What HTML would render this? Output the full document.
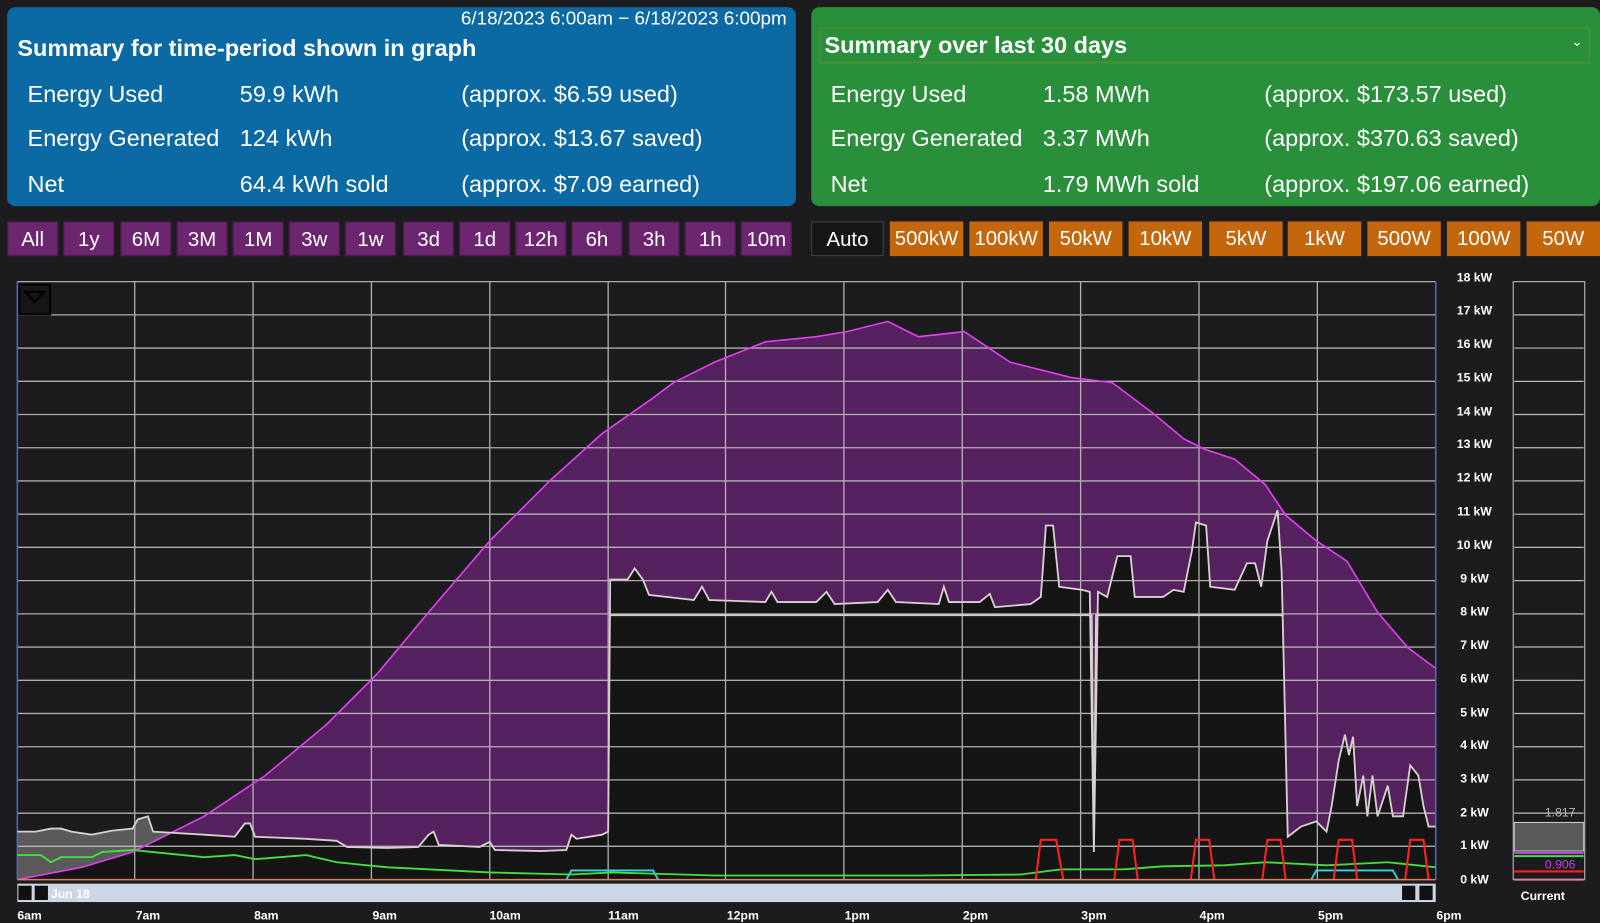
<!DOCTYPE html>
<html><head><meta charset="utf-8"><style>
body{margin:0;width:1600px;height:923px;background:#1c1c1e;font-family:"Liberation Sans",sans-serif;color:#fff;position:relative;overflow:hidden}
#w{position:absolute;left:0;top:0;width:1568px;height:905px;transform:scale(1.020408);transform-origin:0 0}
.panel{position:absolute;top:7px;height:195px;border-radius:8px}
.blue{left:7px;width:773px;background:#0b69a3}
.green{left:795px;width:773px;background:#2a8f3a}
.t{position:absolute;font-size:23px;white-space:nowrap}
.b{font-weight:bold;font-size:23px}
.btn{position:absolute;top:217px;height:34px;line-height:34px;text-align:center;font-size:20px;box-sizing:border-box}
.p{background:#6c256f;border:1px solid #4a1a4c;width:50px}
.o{background:#c4660c;width:72px}
.ax{font-weight:bold;font-size:12px;fill:#fff;font-family:"Liberation Sans",sans-serif}
</style></head><body><div id="w">
<div class="panel blue"></div>
<div class="panel green"></div>
<div style="position:absolute;left:803px;top:27px;width:755px;height:35px;border:1px solid #6a8a2a;box-sizing:border-box"></div>
<div class="t" style="right:797px;top:7px;font-size:18.5px">6/18/2023 6:00am − 6/18/2023 6:00pm</div>
<div class="t b" style="left:17px;top:34px">Summary for time-period shown in graph</div>
<div class="t b" style="left:808px;top:31px">Summary over last 30 days</div>
<div class="t" style="left:1540px;top:33px;font-size:13px">⌄</div>
<div class="t" style="left:27px;top:79px">Energy Used</div><div class="t" style="left:235px;top:79px">59.9 kWh</div><div class="t" style="left:452px;top:79px">(approx. $6.59 used)</div>
<div class="t" style="left:27px;top:122px">Energy Generated</div><div class="t" style="left:235px;top:122px">124 kWh</div><div class="t" style="left:452px;top:122px">(approx. $13.67 saved)</div>
<div class="t" style="left:27px;top:167px">Net</div><div class="t" style="left:235px;top:167px">64.4 kWh sold</div><div class="t" style="left:452px;top:167px">(approx. $7.09 earned)</div>
<div class="t" style="left:814px;top:79px">Energy Used</div><div class="t" style="left:1022px;top:79px">1.58 MWh</div><div class="t" style="left:1239px;top:79px">(approx. $173.57 used)</div>
<div class="t" style="left:814px;top:122px">Energy Generated</div><div class="t" style="left:1022px;top:122px">3.37 MWh</div><div class="t" style="left:1239px;top:122px">(approx. $370.63 saved)</div>
<div class="t" style="left:814px;top:167px">Net</div><div class="t" style="left:1022px;top:167px">1.79 MWh sold</div><div class="t" style="left:1239px;top:167px">(approx. $197.06 earned)</div>

<div class="btn p" style="left:7px">All</div><div class="btn p" style="left:62px">1y</div><div class="btn p" style="left:118px">6M</div><div class="btn p" style="left:173px">3M</div><div class="btn p" style="left:228px">1M</div><div class="btn p" style="left:283px">3w</div><div class="btn p" style="left:338px">1w</div><div class="btn p" style="left:395px">3d</div><div class="btn p" style="left:450px">1d</div><div class="btn p" style="left:505px">12h</div><div class="btn p" style="left:560px">6h</div><div class="btn p" style="left:616px">3h</div><div class="btn p" style="left:671px">1h</div><div class="btn p" style="left:726px">10m</div>
<div class="btn" style="left:795px;width:71px;background:#161616;border:1px solid #444">Auto</div>
<div class="btn o" style="left:872px">500kW</div><div class="btn o" style="left:950px">100kW</div><div class="btn o" style="left:1028px">50kW</div><div class="btn o" style="left:1106px">10kW</div><div class="btn o" style="left:1185px">5kW</div><div class="btn o" style="left:1262px">1kW</div><div class="btn o" style="left:1340px">500W</div><div class="btn o" style="left:1418px">100W</div><div class="btn o" style="left:1496px">50W</div>

<svg width="1568" height="905" style="position:absolute;left:0;top:0">
<defs><clipPath id="gc"><polygon points="17,862 80,850 130,835 200,800 260,760 320,710 370,660 420,600 480,530 540,470 590,425 640,390 660,375 700,355 750,335 800,330 830,325 870,315 900,330 945,325 990,355 1050,370 1090,375 1130,405 1160,430 1180,440 1210,450 1240,475 1260,505 1290,530 1320,550 1350,600 1380,635 1407,655 1407,862"/></clipPath></defs>
<polygon fill="#5a5a5a" points="17,862 17,815 35,815 50,812 60,812 70,815 90,818 110,814 130,812 135,803 145,800 150,815 200,818 230,820 240,807 245,807 250,820 300,822 300,862"/>
<polygon fill="#55215f" points="17,862 80,850 130,835 200,800 260,760 320,710 370,660 420,600 480,530 540,470 590,425 640,390 660,375 700,355 750,335 800,330 830,325 870,315 900,330 945,325 990,355 1050,370 1090,375 1130,405 1160,430 1180,440 1210,450 1240,475 1260,505 1290,530 1320,550 1350,600 1380,635 1407,655 1407,862"/>
<g clip-path="url(#gc)"><polygon fill="#151515" points="17,862 17,815 35,815 50,812 60,812 70,815 90,818 110,814 130,812 135,803 145,800 150,815 200,818 230,820 240,807 245,807 250,820 300,822 330,824 340,830 380,831 410,830 420,818 425,815 430,828 470,830 480,825 485,833 530,834 555,833 560,818 565,822 590,818 596,815 598,568 615,568 622,557 630,568 636,583 680,588 688,575 695,588 750,590 756,580 762,590 800,590 810,580 818,592 860,590 870,578 878,590 920,592 925,575 930,590 960,590 970,582 975,595 1010,592 1020,585 1025,515 1032,515 1038,575 1060,578 1068,580 1072,835 1076,580 1085,585 1095,545 1108,545 1112,585 1140,585 1150,578 1160,580 1168,540 1172,512 1182,515 1186,575 1210,578 1222,552 1230,552 1236,575 1242,530 1252,500 1256,560 1262,820 1275,810 1290,805 1300,815 1305,790 1312,745 1318,720 1322,740 1326,722 1330,790 1336,760 1340,800 1345,760 1350,800 1360,770 1365,800 1375,800 1382,750 1390,760 1395,790 1400,810 1407,810 1407,862"/></g>
<g stroke="#c8c8c8" stroke-width="1.3" opacity="0.85">
<line x1="17" y1="276" x2="1407" y2="276"/><line x1="17" y1="308.6" x2="1407" y2="308.6"/><line x1="17" y1="341.1" x2="1407" y2="341.1"/><line x1="17" y1="373.7" x2="1407" y2="373.7"/><line x1="17" y1="406.2" x2="1407" y2="406.2"/><line x1="17" y1="438.8" x2="1407" y2="438.8"/><line x1="17" y1="471.3" x2="1407" y2="471.3"/><line x1="17" y1="503.9" x2="1407" y2="503.9"/><line x1="17" y1="536.4" x2="1407" y2="536.4"/><line x1="17" y1="569" x2="1407" y2="569"/><line x1="17" y1="601.6" x2="1407" y2="601.6"/><line x1="17" y1="634.1" x2="1407" y2="634.1"/><line x1="17" y1="666.7" x2="1407" y2="666.7"/><line x1="17" y1="699.2" x2="1407" y2="699.2"/><line x1="17" y1="731.8" x2="1407" y2="731.8"/><line x1="17" y1="764.3" x2="1407" y2="764.3"/><line x1="17" y1="796.9" x2="1407" y2="796.9"/><line x1="17" y1="829.4" x2="1407" y2="829.4"/>
<line x1="132" y1="276" x2="132" y2="862"/><line x1="248" y1="276" x2="248" y2="862"/><line x1="364" y1="276" x2="364" y2="862"/><line x1="480" y1="276" x2="480" y2="862"/><line x1="596" y1="276" x2="596" y2="862"/><line x1="711" y1="276" x2="711" y2="862"/><line x1="827" y1="276" x2="827" y2="862"/><line x1="943" y1="276" x2="943" y2="862"/><line x1="1059" y1="276" x2="1059" y2="862"/><line x1="1175" y1="276" x2="1175" y2="862"/><line x1="1291" y1="276" x2="1291" y2="862"/>
</g>
<line x1="17" y1="276" x2="17" y2="862" stroke="#4a6ad0" stroke-width="1.5"/><line x1="1407" y1="276" x2="1407" y2="862" stroke="#4a6ad0" stroke-width="1.5"/>
<polyline fill="none" stroke="#e040f0" stroke-width="1.6" points="17,862 80,850 130,835 200,800 260,760 320,710 370,660 420,600 480,530 540,470 590,425 640,390 660,375 700,355 750,335 800,330 830,325 870,315 900,330 945,325 990,355 1050,370 1090,375 1130,405 1160,430 1180,440 1210,450 1240,475 1260,505 1290,530 1320,550 1350,600 1380,635 1407,655"/>
<polyline fill="none" stroke="#d8d0d0" stroke-width="1.6" points="598,603 1070,603 1072,830 1074,603 1258,603"/>
<polyline fill="none" stroke="#d8d0d0" stroke-width="1.8" points="17,815 35,815 50,812 60,812 70,815 90,818 110,814 130,812 135,803 145,800 150,815 200,818 230,820 240,807 245,807 250,820 300,822 330,824 340,830 380,831 410,830 420,818 425,815 430,828 470,830 480,825 485,833 530,834 555,833 560,818 565,822 590,818 596,815 598,568 615,568 622,557 630,568 636,583 680,588 688,575 695,588 750,590 756,580 762,590 800,590 810,580 818,592 860,590 870,578 878,590 920,592 925,575 930,590 960,590 970,582 975,595 1010,592 1020,585 1025,515 1032,515 1038,575 1060,578 1068,580 1072,835 1076,580 1085,585 1095,545 1108,545 1112,585 1140,585 1150,578 1160,580 1168,540 1172,512 1182,515 1186,575 1210,578 1222,552 1230,552 1236,575 1242,530 1252,500 1256,560 1262,820 1275,810 1290,805 1300,815 1305,790 1312,745 1318,720 1322,740 1326,722 1330,790 1336,760 1340,800 1345,760 1350,800 1360,770 1365,800 1375,800 1382,750 1390,760 1395,790 1400,810 1407,810"/>
<polyline fill="none" stroke="#44e040" stroke-width="1.8" points="17,838 40,838 50,845 60,840 90,840 100,835 130,833 150,835 200,840 230,838 250,842 300,838 330,845 380,850 480,855 560,857 600,855 700,858 900,858 1000,857 1040,852 1100,852 1140,849 1200,848 1240,845 1300,848 1360,845 1407,850"/>
<polyline fill="none" stroke="#30d8e0" stroke-width="1.8" points="555,862 560,853 640,853 645,862"/>
<polyline fill="none" stroke="#30d8e0" stroke-width="1.8" points="1285,862 1290,853 1365,853 1370,862"/>
<g fill="none" stroke="#ff2020" stroke-width="2"><polyline points="1015,862 1020,823 1035,823 1042,862"/><polyline points="1092,862 1097,823 1110,823 1115,862"/><polyline points="1167,862 1172,823 1185,823 1190,862"/><polyline points="1237,862 1242,823 1255,823 1260,862"/><polyline points="1307,862 1312,823 1325,823 1330,862"/><polyline points="1377,862 1382,823 1395,823 1400,862"/></g>
<line x1="17" y1="862" x2="1407" y2="862" stroke="#e08060" stroke-width="1.5"/>
<rect x="19" y="279" width="30" height="29" fill="#161616" stroke="#000" stroke-width="2"/>
<polygon points="25,286 43,286 34,296" fill="none" stroke="#000" stroke-width="2"/>
<rect x="17" y="866" width="1390" height="18" fill="#cdd6e6"/>
<rect x="18" y="868" width="13" height="14" fill="#111"/><rect x="34" y="868" width="13" height="14" fill="#111"/>
<rect x="1374" y="868" width="13" height="14" fill="#111"/><rect x="1391" y="868" width="13" height="14" fill="#111"/>
<text x="50" y="880" class="ax" fill="#eef">Jun 18</text>
<g text-anchor="middle"><text x="29" y="901" class="ax">6am</text><text x="145" y="901" class="ax">7am</text><text x="261" y="901" class="ax">8am</text><text x="377" y="901" class="ax">9am</text><text x="495" y="901" class="ax">10am</text><text x="611" y="901" class="ax">11am</text><text x="728" y="901" class="ax">12pm</text><text x="840" y="901" class="ax">1pm</text><text x="956" y="901" class="ax">2pm</text><text x="1072" y="901" class="ax">3pm</text><text x="1188" y="901" class="ax">4pm</text><text x="1304" y="901" class="ax">5pm</text><text x="1420" y="901" class="ax">6pm</text></g>
<g text-anchor="middle"><text x="1445" y="276" class="ax">18 kW</text><text x="1445" y="308" class="ax">17 kW</text><text x="1445" y="341" class="ax">16 kW</text><text x="1445" y="374" class="ax">15 kW</text><text x="1445" y="407" class="ax">14 kW</text><text x="1445" y="439" class="ax">13 kW</text><text x="1445" y="472" class="ax">12 kW</text><text x="1445" y="505" class="ax">11 kW</text><text x="1445" y="538" class="ax">10 kW</text><text x="1445" y="571" class="ax">9 kW</text><text x="1445" y="603" class="ax">8 kW</text><text x="1445" y="636" class="ax">7 kW</text><text x="1445" y="669" class="ax">6 kW</text><text x="1445" y="702" class="ax">5 kW</text><text x="1445" y="734" class="ax">4 kW</text><text x="1445" y="767" class="ax">3 kW</text><text x="1445" y="800" class="ax">2 kW</text><text x="1445" y="832" class="ax">1 kW</text><text x="1445" y="866" class="ax">0 kW</text></g>
<g stroke="#bbb" stroke-width="1.2"><line x1="1484" y1="308.6" x2="1552" y2="308.6"/><line x1="1484" y1="341.1" x2="1552" y2="341.1"/><line x1="1484" y1="373.7" x2="1552" y2="373.7"/><line x1="1484" y1="406.2" x2="1552" y2="406.2"/><line x1="1484" y1="438.8" x2="1552" y2="438.8"/><line x1="1484" y1="471.3" x2="1552" y2="471.3"/><line x1="1484" y1="503.9" x2="1552" y2="503.9"/><line x1="1484" y1="536.4" x2="1552" y2="536.4"/><line x1="1484" y1="569" x2="1552" y2="569"/><line x1="1484" y1="601.6" x2="1552" y2="601.6"/><line x1="1484" y1="634.1" x2="1552" y2="634.1"/><line x1="1484" y1="666.7" x2="1552" y2="666.7"/><line x1="1484" y1="699.2" x2="1552" y2="699.2"/><line x1="1484" y1="731.8" x2="1552" y2="731.8"/><line x1="1484" y1="764.3" x2="1552" y2="764.3"/><line x1="1484" y1="796.9" x2="1552" y2="796.9"/></g>
<rect x="1483" y="276" width="70" height="586" fill="none" stroke="#aaa" stroke-width="1.2"/>
<rect x="1484" y="806" width="68" height="28" fill="#5a5a5a" stroke="#ccc"/>
<line x1="1484" y1="836" x2="1552" y2="836" stroke="#c040e0" stroke-width="2"/>
<line x1="1484" y1="839" x2="1552" y2="839" stroke="#44e040" stroke-width="2"/>
<line x1="1484" y1="854" x2="1552" y2="854" stroke="#ff2020" stroke-width="2"/>
<line x1="1484" y1="862" x2="1552" y2="862" stroke="#e080a0" stroke-width="2"/>
<text x="1544" y="800" font-size="12" fill="#bbb" text-anchor="end" font-family="Liberation Sans">1.817</text>
<text x="1544" y="851" font-size="12" fill="#c040e0" text-anchor="end" font-family="Liberation Sans">0.906</text>
<text x="1512" y="882" class="ax" text-anchor="middle">Current</text>
</svg>
</div></body></html>
